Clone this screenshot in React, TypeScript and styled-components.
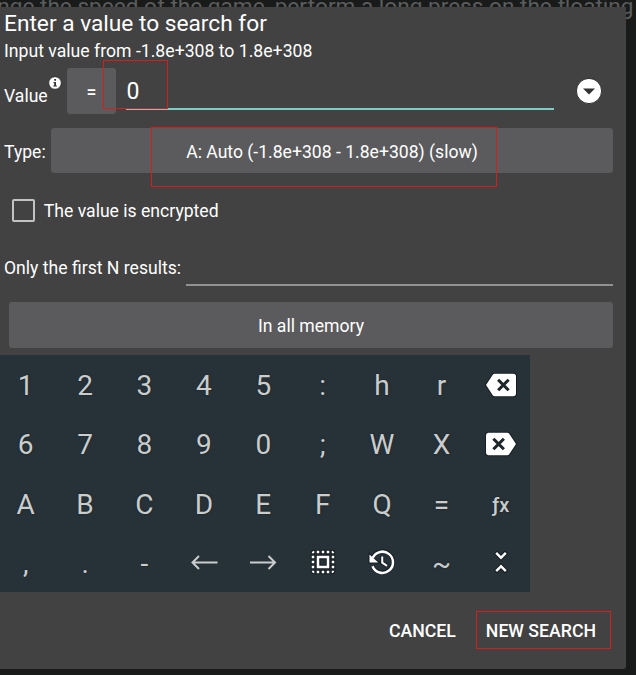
import React from "react";
import styled, { createGlobalStyle } from "styled-components";

const Global = createGlobalStyle`
  * { box-sizing: border-box; }
  body { margin: 0; background: #191b1a; font-family: Roboto, "Liberation Sans", sans-serif; overflow: hidden; }
`;

const Screen = styled.main`
  position: relative;
  width: 636px;
  height: 675px;
  padding-top: 7px;
  overflow: hidden;
  background: #191b1a;
`;

const Backdrop = styled.div`
  position: absolute;
  top: -8px;
  right: 2.5px;
  font-size: 22.6px;
  line-height: 30px;
  white-space: nowrap;
  color: #5c5d5d;
`;

const Dialog = styled.section`
  position: relative;
  display: flex;
  flex-direction: column;
  width: 626px;
  height: 662px;
  background: #424242;
  border-radius: 0 0 3px 0;
  color: #fff;
  font-size: 17.6px;
  white-space: nowrap;
`;

const Title = styled.h1`
  margin: 0;
  padding-left: 4px;
  height: 32px;
  font-size: 22.7px;
  font-weight: 400;
  line-height: 34px;
`;

const Hint = styled.p`
  margin: 0;
  padding-left: 4px;
  height: 22px;
  font-size: 17.65px;
  line-height: 24px;
`;

const ValueRow = styled.div`
  display: flex;
  height: 46px;
  margin-top: 7px;
  padding-left: 4px;
`;

const ValueLabel = styled.label`
  width: 44px;
  padding-top: 17px;
  line-height: 22px;
`;

const InfoIcon = styled.svg`
  width: 14px;
  height: 14px;
  margin: 8px 5px 0 0;
`;

const Button = styled.button<{ $w: number; $h?: number; $bold?: boolean }>`
  width: ${(p) => p.$w}px;
  height: ${(p) => p.$h ?? 46}px;
  flex: none;
  padding: 2px 0 0;
  border: 0;
  border-radius: 3px;
  background: #5b5b5d;
  color: #fff;
  font: ${(p) => (p.$bold ? 500 : 400)} 17.6px/22px Roboto, sans-serif;
`;

const Field = styled.div`
  width: 428px;
  height: 42px;
  margin-left: 10px;
  padding-left: 0.5px;
  border-bottom: 2px solid #80cbc4;
  font-size: 23px;
  line-height: 48px;
`;

const DropIcon = styled.svg`
  width: 28px;
  height: 28px;
  margin: 9px 0 0 20.5px;
`;

const TypeRow = styled.div`
  display: flex;
  align-items: center;
  height: 45px;
  margin-top: 14px;
  padding-left: 4px;
`;

const TypeLabel = styled.label`
  width: 47px;
  padding-top: 2px;
`;

const CheckRow = styled.label`
  display: flex;
  align-items: center;
  gap: 8.4px;
  height: 24px;
  margin-top: 25px;
  padding-left: 12.4px;
`;

const CheckText = styled.span`
  padding-top: 2px;
`;

const Box = styled.span`
  width: 23px;
  height: 23px;
  border: 2.5px solid #c3c3c3;
  border-radius: 2px;
`;

const LimitRow = styled.div`
  display: flex;
  align-items: flex-end;
  height: 42px;
  margin-top: 22px;
  padding-left: 4px;
`;

const LimitLabel = styled.label`
  width: 182px;
  height: 29px;
  line-height: 22px;
`;

const LimitField = styled.div`
  width: 427px;
  border-bottom: 2px solid #929193;
`;

const MemoryRow = styled.div`
  margin-top: 16px;
  padding-left: 9px;
`;

const Keypad = styled.div`
  display: grid;
  grid-template-columns: repeat(9, 59.4px);
  grid-template-rows: repeat(4, 59.25px);
  width: 534px;
  height: 237px;
  margin: 7px 0 0 -4px;
  background: #263238;
`;

const Key = styled.button<{ $kind?: "small" }>`
  display: flex;
  align-items: center;
  justify-content: center;
  padding: 3px 0 0;
  border: 0;
  background: none;
  color: #cbcccc;
  font: ${(p) => (p.$kind === "small" ? "500 20px" : "400 28px")}/32px Roboto, sans-serif;
  text-shadow: 0 0 2px #182126;
`;

const KeyIcon = styled.svg`
  width: 30px;
  height: 30px;
  margin-top: -3px;
  overflow: visible;
`;

const Actions = styled.footer`
  display: flex;
  justify-content: flex-end;
  gap: 30px;
  margin-top: 28px;
  padding-right: 30px;
`;

const Action = styled.button`
  padding: 0;
  border: 0;
  background: none;
  color: #fff;
  font: 500 17.7px/22px Roboto, sans-serif;
`;

const Mark = styled.div<{ $x: number; $y: number; $w: number; $h: number }>`
  position: absolute;
  left: ${(p) => p.$x}px;
  top: ${(p) => p.$y}px;
  width: ${(p) => p.$w}px;
  height: ${(p) => p.$h}px;
  border: 1px solid #d41f1f;
  pointer-events: none;
`;

const iconPaths: Record<string, string> = {
  backspace:
    "M22 3H7c-.69 0-1.23.35-1.59.88L0 12l5.41 8.11c.36.53.9.89 1.59.89h15c1.1 0 2-.9 2-2V5c0-1.1-.9-2-2-2z",
  selectAll:
    "M3 5h2V3c-1.1 0-2 .9-2 2zm0 8h2v-2H3v2zm4 8h2v-2H7v2zM3 9h2V7H3v2zm10-6h-2v2h2V3zm6 0v2h2c0-1.1-.9-2-2-2zM5 21v-2H3c0 1.1.9 2 2 2zm-2-4h2v-2H3v2zM9 3H7v2h2V3zm2 18h2v-2h-2v2zm8-8h2v-2h-2v2zm0 8c1.1 0 2-.9 2-2h-2v2zm0-12h2V7h-2v2zm0 8h2v-2h-2v2zm-4 4h2v-2h-2v2zm0-16h2V3h-2v2zM7 17h10V7H7v10zm2-8h6v6H9V9z",
  collapse:
    "M7.41 18.59L8.83 20 12 16.83 15.17 20l1.41-1.41L12 14l-4.59 4.59zm9.18-13.18L15.17 4 12 7.17 8.83 4 7.41 5.41 12 10l4.59-4.59z",
};

const halo = { stroke: "#151c20", strokeWidth: 1.6, paintOrder: "stroke" } as const;

function Icon({ name }: { name: string }) {
  if (name === "backspace" || name === "delete") {
    return (
      <KeyIcon viewBox="0 0 24 24">
        <g transform={name === "delete" ? "matrix(-1 0 0 1 24 0)" : undefined}>
          <path d={iconPaths.backspace} fill="#fff" {...halo} />
          <path d="M9.7 7.8l8.4 8.4M18.1 7.8l-8.4 8.4" stroke="#1c262b" strokeWidth="2.5" />
        </g>
      </KeyIcon>
    );
  }
  if (name === "history") {
    return (
      <KeyIcon viewBox="0 0 24 24" fill="none">
        <g stroke="#151c20" strokeWidth="3.2">
          <path d="M4.8 7.6A8.5 8.5 0 1 1 4.4 15.4" />
          <path d="M12.2 7.5v5l3.8 2.6" />
        </g>
        <path d="M2 6v6.4H9z" fill="#fff" {...halo} />
        <path d="M4.6 8.6A8.5 8.5 0 1 1 4.4 15.4" stroke="#fff" strokeWidth="2" />
        <path d="M12.2 7.5v5l3.8 2.6" stroke="#fff" strokeWidth="1.6" />
      </KeyIcon>
    );
  }
  return (
    <KeyIcon viewBox="0 0 24 24">
      <path d={iconPaths[name]} fill="#fff" {...halo} />
    </KeyIcon>
  );
}

function Arrow({ right }: { right?: boolean }) {
  return (
    <KeyIcon viewBox="0 0 30 30" fill="none" stroke="#cbcccc" strokeWidth="2">
      <path d={right ? "M2 15.5h25M20.5 9l6.5 6.5-6.5 6.5" : "M28.5 15.5h-25M10 9l-6.5 6.5 6.5 6.5"} />
    </KeyIcon>
  );
}

const keys = [
  "1", "2", "3", "4", "5", ":", "h", "r", "backspace",
  "6", "7", "8", "9", "0", ";", "W", "X", "delete",
  "A", "B", "C", "D", "E", "F", "Q", "=", "ƒx",
  ",", ".", "-", "left", "right", "selectAll", "history", "~", "collapse",
];

function renderKey(k: string) {
  if (k === "left") return <Arrow />;
  if (k === "right") return <Arrow right />;
  if (k.length > 2) return <Icon name={k} />;
  return k;
}

export default function App() {
  return (
    <>
      <Global />
      <Screen>
        <Backdrop>nge the speed of the game, perform a long press on the floating</Backdrop>
        <Dialog>
          <Title>Enter a value to search for</Title>
          <Hint>Input value from -1.8e+308 to 1.8e+308</Hint>
          <ValueRow>
            <ValueLabel>Value</ValueLabel>
            <InfoIcon viewBox="0 0 14 14">
              <circle cx="7" cy="7" r="6.3" fill="#fff" stroke="#222" strokeWidth=".8" />
              <path d="M6.2 3h1.8v1.8H6.2zM5.5 6H8v3.600h.9v.9H5.300v-.9h.9V6.900h-.7z" fill="#333" />
            </InfoIcon>
            <Button $w={49} $bold>=</Button>
            <Field>0</Field>
            <DropIcon viewBox="0 0 28 28">
              <circle cx="14" cy="14" r="12.6" fill="#fff" stroke="#222" strokeWidth=".9" />
              <path d="M8 11.5h12l-6 6z" fill="#333" />
            </DropIcon>
          </ValueRow>
          <TypeRow>
            <TypeLabel>Type:</TypeLabel>
            <Button $w={562} $h={45}>A: Auto (-1.8e+308 - 1.8e+308) (slow)</Button>
          </TypeRow>
          <CheckRow>
            <Box />
            <CheckText>The value is encrypted</CheckText>
          </CheckRow>
          <LimitRow>
            <LimitLabel>Only the first N results:</LimitLabel>
            <LimitField />
          </LimitRow>
          <MemoryRow>
            <Button $w={604}>In all memory</Button>
          </MemoryRow>
          <Keypad>
            {keys.map((k) => (
              <Key key={k} $kind={k === "ƒx" ? "small" : undefined}>
                {renderKey(k)}
              </Key>
            ))}
          </Keypad>
          <Actions>
            <Action>CANCEL</Action>
            <Action>NEW SEARCH</Action>
          </Actions>
        </Dialog>
        <Mark $x={103} $y={60} $w={65} $h={49} />
        <Mark $x={151} $y={127} $w={346} $h={60} />
        <Mark $x={476} $y={611} $w={135} $h={38} />
      </Screen>
    </>
  );
}
